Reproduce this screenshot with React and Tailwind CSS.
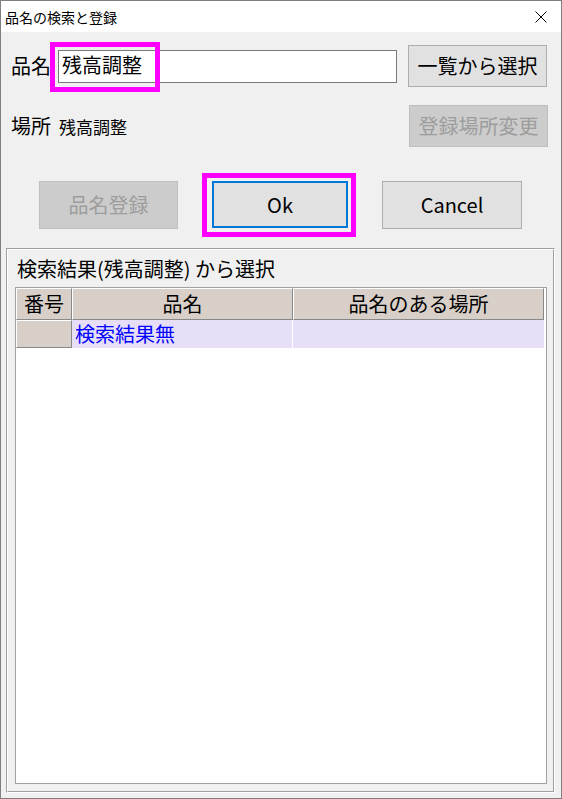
export default function App() {
  const enabledBtn =
    "bg-[#e1e1e1] border border-[#adadad] flex items-center justify-center text-[20px] leading-none text-black";
  const disabledBtn =
    "bg-[#cccccc] border border-[#bfbfbf] flex items-center justify-center text-[20px] leading-none text-[#9d9d9d]";
  const hdrCell =
    "bg-[#d8d0c8] border border-white border-r-[#888888] border-b-[#888888] flex items-center justify-center text-[20px] leading-none text-black";
  return (
    <div className="w-[562px] h-[799px] border border-[#7f7f7f] bg-[#f0f0f0] flex flex-col font-['Noto_Sans_CJK_JP',sans-serif] text-black overflow-hidden">
      {/* Title bar */}
      <div className="h-[31px] shrink-0 bg-white flex items-center justify-between pl-[4px] pr-[14px]">
        <span className="text-[14px] leading-none">品名の検索と登録</span>
        <svg width="12" height="12" viewBox="0 0 12 12" className="block">
          <path d="M0.5 0.5L11.5 11.5M11.5 0.5L0.5 11.5" stroke="#000" strokeWidth="1" fill="none" />
        </svg>
      </div>

      {/* Body */}
      <div className="flex-1 flex flex-col">
        {/* Row 1 */}
        <div className="mt-[13px] pl-[10px] pr-[13px] h-[42px] flex items-center">
          <span className="w-[47px] text-[20px] leading-none">品名</span>
          <div className="relative w-[339px] h-[33px] border border-[#7a7a7a] bg-white flex items-center pl-[3px]">
            <span className="text-[20px] leading-none -mt-[3px]">残高調整</span>
            <div className="absolute left-[-9px] top-[-9px] w-[110px] h-[50px] border-[5px] border-[#ff00ff] pointer-events-none" />
          </div>
          <div className={`ml-[11px] w-[139px] h-[42px] ${enabledBtn}`}>一覧から選択</div>
        </div>

        {/* Row 2 */}
        <div className="mt-[18px] pl-[10px] pr-[13px] h-[42px] flex items-center">
          <span className="w-[48px] text-[20px] leading-none">場所</span>
          <span className="flex-1 text-[17px] leading-none">残高調整</span>
          <div className={`w-[139px] h-[42px] ${disabledBtn}`}>登録場所変更</div>
        </div>

        {/* Row 3 */}
        <div className="mt-[34px] pl-[38px] h-[48px] flex gap-[34px]">
          <div className={`w-[139px] h-[48px] ${disabledBtn}`}>品名登録</div>
          <div className="relative w-[136px] h-[47px] bg-[#e1e1e1] border-2 border-[#0078d7] flex items-center justify-center text-[20px] leading-none">
            Ok
            <div className="absolute left-[-12px] top-[-10px] w-[154px] h-[64px] border-[5px] border-[#ff00ff] pointer-events-none" />
          </div>
          <div className={`w-[140px] h-[48px] ${enabledBtn}`}>Cancel</div>
        </div>

        {/* Group box */}
        <div className="mt-[19px] ml-[5px] mr-[6px] mb-[5px] flex-1 flex border border-[#a0a0a0] border-r-white border-b-white">
          <div className="flex-1 flex flex-col border border-white border-r-[#a0a0a0] border-b-[#a0a0a0]">
            <div className="h-[37px] pl-[9px] flex items-center">
              <span className="text-[20px] leading-none">検索結果(残高調整) から選択</span>
            </div>
            <div className="ml-[7px] mr-[6px] mb-[7px] flex-1 border border-[#a0a0a0] bg-white flex flex-col">
              <div className="h-[32px] flex">
                <div className={`w-[56px] ${hdrCell}`}>番号</div>
                <div className={`w-[221px] ${hdrCell}`}>品名</div>
                <div className={`w-[251px] ${hdrCell}`}>品名のある場所</div>
              </div>
              <div className="h-[28px] flex">
                <div className="w-[56px] bg-[#d8d0c8] border border-white border-r-[#888888] border-b-[#888888]" />
                <div className="w-[221px] bg-[#e6dff7] border-r border-white flex items-center pl-[3px] text-[20px] leading-none text-[#0000ff]">
                  検索結果無
                </div>
                <div className="w-[251px] bg-[#e6dff7]" />
              </div>
            </div>
          </div>
        </div>
      </div>
    </div>
  );
}
